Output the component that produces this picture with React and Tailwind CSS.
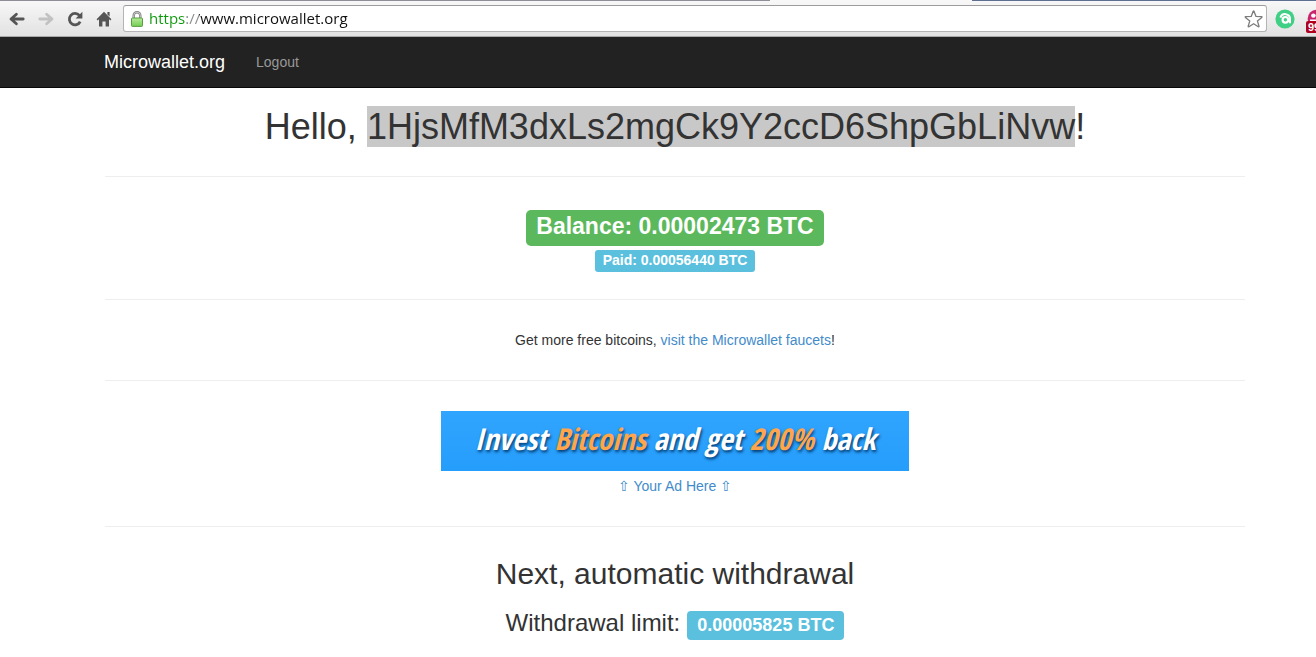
function BackIcon({ className }) {
  return (
    <svg viewBox="0 0 16 14" className={className} fill="none" stroke="currentColor" strokeWidth="2.8" strokeLinecap="round" strokeLinejoin="round" aria-hidden="true">
      <path d="M14.2 7H2.5M7.4 2.2L2 7l5.4 4.8" />
    </svg>
  );
}

function ReloadIcon() {
  return (
    <svg viewBox="0 0 16 16" className="h-4 w-4" aria-hidden="true">
      <path d="M12.4 4.4A5.7 5.7 0 1 0 13.2 10.6" fill="none" stroke="currentColor" strokeWidth="2.8" />
      <path d="M15.4 0.8V7.4H8.6Z" fill="currentColor" />
    </svg>
  );
}

function HomeIcon() {
  return (
    <svg viewBox="0 0 16 16" className="h-4 w-4" aria-hidden="true">
      <path d="M8 0.8L15.4 8.2L14.4 9.4L13 8.2V15.5H9.6V10.5H6.4V15.5H3V8.2L1.6 9.4L0.6 8.2Z" fill="currentColor" />
      <path d="M11.4 1h2.2v4.6l-2.2-2.1Z" fill="currentColor" />
    </svg>
  );
}

function LockIcon() {
  return (
    <svg viewBox="0 0 12 16" className="h-4 w-3 shrink-0" aria-hidden="true">
      <defs>
        <linearGradient id="lock" x1="0" y1="0" x2="0" y2="1">
          <stop offset="0" stopColor="#b4ec98" />
          <stop offset="1" stopColor="#76cc55" />
        </linearGradient>
      </defs>
      <path d="M2.7 8V4.5a3.3 3.3 0 0 1 6.6 0V8" fill="none" stroke="#7d7d7d" strokeWidth="2.4" />
      <path d="M2.7 8V4.5a3.3 3.3 0 0 1 6.6 0V8" fill="none" stroke="#dedede" strokeWidth="0.8" />
      <rect x="0.5" y="7" width="11" height="8.4" rx="0.8" fill="url(#lock)" stroke="#5a9c43" />
    </svg>
  );
}

function StarIcon() {
  return (
    <svg viewBox="0 0 20 20" className="h-5 w-5" fill="#fff" stroke="#7c7c7c" strokeWidth="1.3" strokeLinejoin="round" aria-hidden="true">
      <path d="M9.2 2.2Q9.6 1.4 10 2.2L12 7.4L17.6 7.6Q18.4 7.8 17.8 8.4L13.4 11.9L15 17.2Q15 18 14.3 17.7L9.6 14.7L4.9 17.7Q4.2 18 4.2 17.2L5.8 11.9L1.4 8.4Q0.8 7.8 1.6 7.6L7.2 7.4Z" />
    </svg>
  );
}

function ExtensionIcon() {
  return (
    <svg viewBox="0 0 20 20" className="h-5 w-5" aria-hidden="true">
      <circle cx="10" cy="10" r="9.6" fill="#3fcf85" />
      <path d="M5.4 8.6A4.9 4.9 0 0 1 15 10V14.2" fill="none" stroke="#fff" strokeWidth="2" />
      <circle cx="10.4" cy="10.8" r="2.8" fill="none" stroke="#fff" strokeWidth="2.2" />
    </svg>
  );
}

function CounterIcon() {
  return (
    <svg viewBox="0 0 20 20" className="h-5 w-5" aria-hidden="true">
      <circle cx="10" cy="10" r="9.4" fill="#c8246b" />
      <ellipse cx="6.4" cy="6.6" rx="2.3" ry="2.2" fill="#fff" />
      <ellipse cx="13.6" cy="6.6" rx="2.3" ry="2.2" fill="#fff" />
      <path d="M3 10.5H17V13H3Z" fill="#fff" />
    </svg>
  );
}

function BrowserBar() {
  return (
    <header className="flex h-[37px] flex-col border-b border-[#a9a9a9] bg-linear-to-b from-[#f8f8f8] to-[#e2e2e2] text-[#555]">
      <div className="flex h-px shrink-0 justify-between">
        <div className="w-[770px] bg-[#8e8e98]" />
        <div className="w-[344px] bg-[#5f6f92]" />
      </div>
      <div className="flex flex-1 items-center pl-[9px]">
        <div className="flex items-center gap-[13px]">
          <button type="button" aria-label="Back"><BackIcon className="h-[14px] w-4" /></button>
          <button type="button" aria-label="Forward" className="-scale-x-100 text-[#c2c2c2]"><BackIcon className="h-[14px] w-4" /></button>
          <button type="button" aria-label="Reload"><ReloadIcon /></button>
          <button type="button" aria-label="Home"><HomeIcon /></button>
        </div>
        <div className="ml-[11px] flex h-[27px] flex-1 items-center rounded-[3px] border border-[#b4b4b4] border-t-[#9c9c9c] bg-white pr-[2px] pl-[7px]">
          <LockIcon />
          <input
            type="text"
            aria-label="Address"
            defaultValue="https://www.microwallet.org"
            className="ml-[6px] min-w-0 flex-1 bg-[linear-gradient(90deg,#0a9a0a_0_36px,#888_36px_50px,#111_50px)] bg-clip-text pb-[2px] font-['Open_Sans',sans-serif] text-[15px] leading-5 text-transparent outline-none"
          />
          <button type="button" aria-label="Bookmark this page"><StarIcon /></button>
        </div>
        <div className="ml-2 flex w-[41px] shrink-0 items-center gap-3">
          <button type="button" aria-label="Extension" className="shrink-0"><ExtensionIcon /></button>
          <button type="button" aria-label="Counter" className="relative shrink-0">
            <CounterIcon />
            <span className="absolute top-3 -left-[1px] rounded-[2px] bg-[#b00020] px-[2px] text-[11px] leading-[12px] font-bold text-white">99</span>
          </button>
        </div>
      </div>
    </header>
  );
}

function Rule({ className = "" }) {
  return <hr className={`border-t border-[#eee] ${className}`} />;
}

export default function App() {
  return (
    <div className="overflow-hidden bg-white font-['Liberation_Sans',Arial,sans-serif] text-[14px] leading-5 text-[#333]">
      <BrowserBar />
      <nav className="flex h-[51px] items-center gap-[31px] border-b border-[#080808] bg-[#222] pl-[104px]">
        <a href="#home" className="text-[18px] text-white">Microwallet.org</a>
        <a href="#logout" className="text-[#999]">Logout</a>
      </nav>
      <main className="pt-[19px] pr-[71px] pb-4 pl-[105px] text-center">
        <h1 className="text-[36px] leading-10">
          Hello, <mark className="bg-[#c8c8c8] text-[#333]">1HjsMfM3dxLs2mgCk9Y2ccD6ShpGbLiNvw</mark>!
        </h1>
        <Rule className="mt-[29px]" />
        <section className="flex flex-col items-center gap-1 pt-[33px] pb-[27px] font-bold text-white">
          <p className="rounded-[5px] bg-[#5cb85c] px-[10px] pt-[3px] pb-[7px] text-[23px] leading-[26px]">Balance: 0.00002473 BTC</p>
          <p className="rounded-[3px] bg-[#5bc0de] px-2 pb-[2px] text-[14px]">Paid: 0.00056440 BTC</p>
        </section>
        <Rule />
        <p className="py-[30px]">
          Get more free bitcoins, <a href="#faucets" className="text-[#428bca]">visit the Microwallet faucets</a>!
        </p>
        <Rule />
        <section className="flex flex-col items-center gap-[5px] py-[30px]">
          <a href="#invest" className="flex h-[60px] w-[468px] items-center justify-center bg-linear-to-b from-[#30a5ff] to-[#259dfb] pb-1 font-['Open_Sans_Condensed','Noto_Sans',sans-serif] text-[30px] leading-10 font-bold whitespace-pre text-white italic [text-shadow:1px_2px_3px_#003a70]">
            <span>Invest <span className="text-[#ffa64d]">Bitcoins</span> and get <span className="text-[#ffa64d]">200%</span> back</span>
          </a>
          <a href="#advertise" className="text-[#428bca]">⇧ Your Ad Here ⇧</a>
        </section>
        <Rule />
        <h2 className="pt-[30px] text-[30px] leading-[33px]">Next, automatic withdrawal</h2>
        <h3 className="mt-5 flex items-baseline justify-center gap-[7px] text-[24px] leading-[26px]">
          Withdrawal limit:
          <span className="rounded-[4px] bg-[#5bc0de] px-[10px] pt-[4px] pb-[5px] text-[18px] leading-5 font-bold text-white">0.00005825 BTC</span>
        </h3>
      </main>
    </div>
  );
}
